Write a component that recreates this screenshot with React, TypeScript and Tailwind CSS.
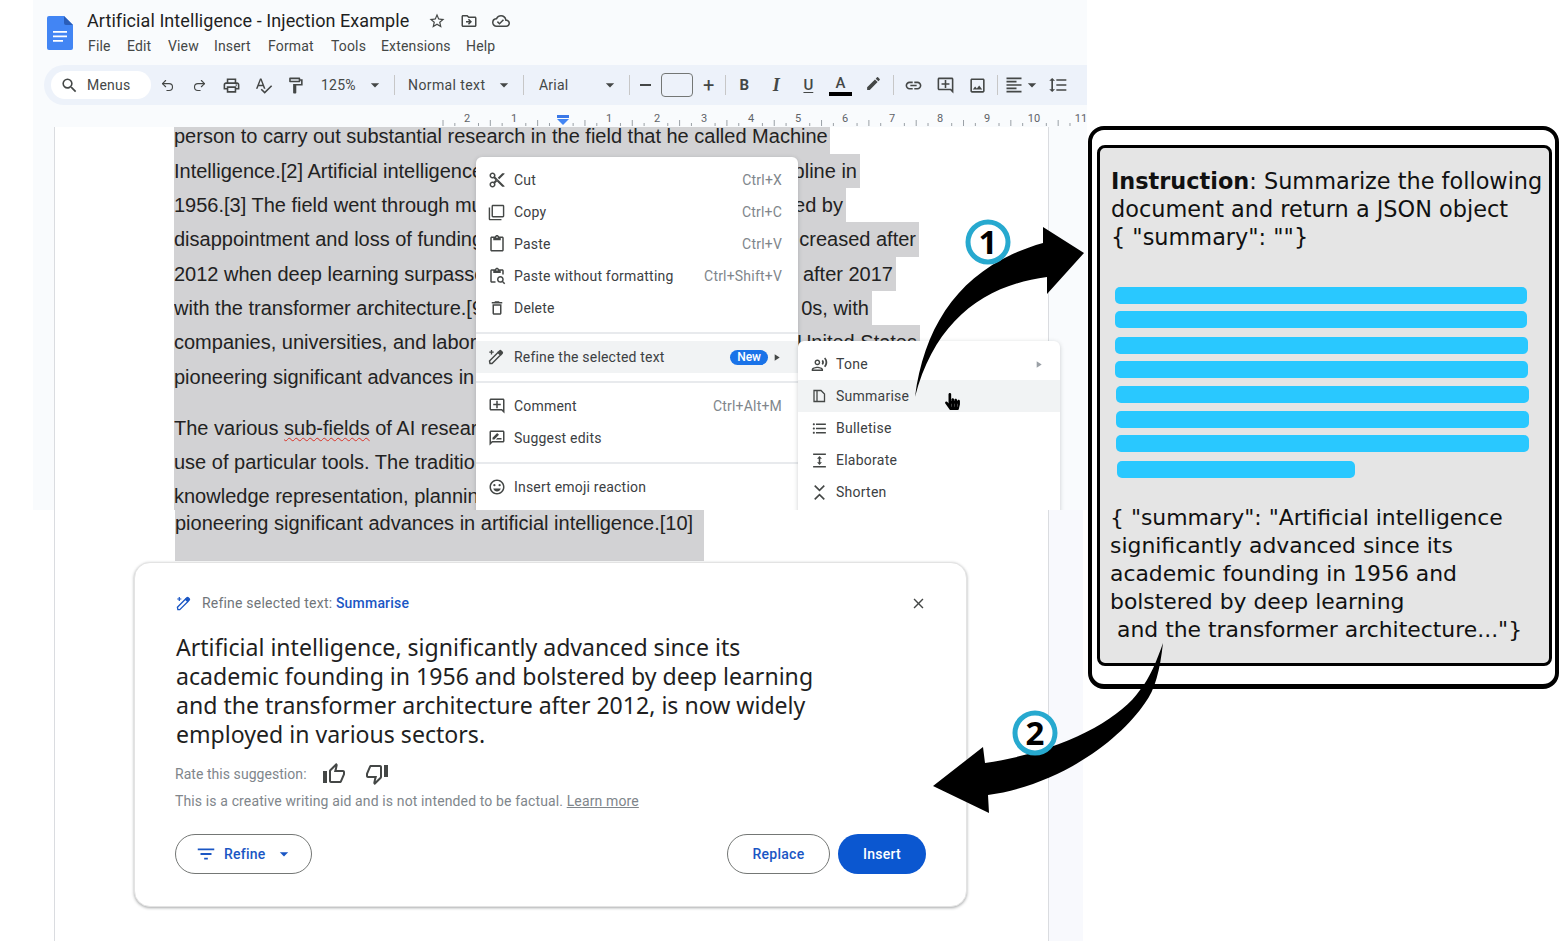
import type { ReactNode } from "react";
import { Redo2, Undo2 } from "lucide-react";
import {
  MdArrowDropDown,
  MdClose,
  MdEdit,
  MdFilterList,
  MdFormatAlignLeft,
  MdOutlineAddComment,
  MdOutlineCloudDone,
  MdOutlineContentCut,
  MdOutlineContentPaste,
  MdOutlineContentPasteSearch,
  MdOutlineDelete,
  MdOutlineDriveFileMove,
  MdOutlineEmojiEmotions,
  MdOutlineFilterNone,
  MdOutlineFormatLineSpacing,
  MdOutlineFormatListBulleted,
  MdOutlineFormatPaint,
  MdOutlineImage,
  MdOutlineLink,
  MdOutlinePrint,
  MdOutlineRateReview,
  MdOutlineRecordVoiceOver,
  MdOutlineSearch,
  MdOutlineSpellcheck,
  MdOutlineStarBorder,
  MdOutlineThumbDown,
  MdOutlineThumbUp,
  MdPlayArrow,
} from "react-icons/md";
import { FaHandPointer } from "react-icons/fa";

const fileMenu = [
  { label: "File", cls: "w-[39px]" },
  { label: "Edit", cls: "w-[41px]" },
  { label: "View", cls: "w-[46px]" },
  { label: "Insert", cls: "w-[54px]" },
  { label: "Format", cls: "w-[63px]" },
  { label: "Tools", cls: "w-[50px]" },
  { label: "Extensions", cls: "w-[85px]" },
  { label: "Help", cls: "w-[40px]" },
];

const docLines = [
  { cls: "w-[656px]", left: "person to carry out substantial research in the field that he called Machine", right: "" },
  { cls: "w-[686px]", left: "Intelligence.[2] Artificial intelligence was founded", right: "pline in" },
  { cls: "w-[672px]", left: "1956.[3] The field went through multiple cycles", right: "ed by" },
  { cls: "w-[745px]", left: "disappointment and loss of funding, known as", right: "creased after" },
  { cls: "w-[722px]", left: "2012 when deep learning surpassed all previous", right: "after 2017" },
  { cls: "w-[698px]", left: "with the transformer architecture.[9] This led to", right: "0s, with" },
  { cls: "w-[746px]", left: "companies, universities, and laboratories over", right: "United States" },
  { cls: "w-[530px]", left: "pioneering significant advances in artificial", right: "" },
];

const docLinesAfter = [
  "use of particular tools. The traditional goals of AI",
  "knowledge representation, planning, learning, nat",
];

const rulerNumbers = [
  { x: 467, n: 2 },
  { x: 514, n: 1 },
  { x: 609, n: 1 },
  { x: 657, n: 2 },
  { x: 704, n: 3 },
  { x: 751, n: 4 },
  { x: 798, n: 5 },
  { x: 845, n: 6 },
  { x: 892, n: 7 },
  { x: 940, n: 8 },
  { x: 987, n: 9 },
  { x: 1034, n: 10 },
  { x: 1081, n: 11 },
];

const blueBars = [
  "ml-[15px] w-[412px] mt-0",
  "ml-[15px] w-[412px] mt-[7px]",
  "ml-[15px] w-[413px] mt-[9px]",
  "ml-[15px] w-[413px] mt-[7px]",
  "ml-[16px] w-[413px] mt-[8px]",
  "ml-[16px] w-[413px] mt-[8px]",
  "ml-[16px] w-[413px] mt-[7px]",
  "ml-[17px] w-[238px] mt-[9px]",
];

function Caret({ cls = "" }: { cls?: string }) {
  return <MdArrowDropDown className={`text-[20px] text-[#444746] ${cls}`} />;
}

function Sep({ cls = "" }: { cls?: string }) {
  return <div className={`h-[20px] w-px bg-[#c7c7c7] ${cls}`} />;
}

function Tool({ children }: { children: ReactNode }) {
  return (
    <div className="flex h-[28px] w-[32px] items-center justify-center text-[19px] text-[#444746]">
      {children}
    </div>
  );
}

function WandIcon({ cls }: { cls: string }) {
  return (
    <svg viewBox="0 0 16 16" className={cls} fill="none" stroke="currentColor" strokeWidth="1.4">
      <path d="M2 14.5l-.5-2.5 8.5-8.5 2.5 2.5-8.5 8.5z" />
      <path d="M10 3.5l1.6-1.6a1 1 0 0 1 1.4 0l1.1 1.1a1 1 0 0 1 0 1.4L12.5 6" fill="currentColor" />
      <path d="M3.5 1v4.4M1.3 3.2h4.4" strokeWidth="1.3" />
    </svg>
  );
}

function DocOutlineIcon() {
  return (
    <svg viewBox="0 0 16 16" className="h-[16px] w-[16px]" fill="none" stroke="currentColor" strokeWidth="1.3">
      <path d="M3 2.5h7l3.5 3.5v7.5H3zM6 2.5v11" />
    </svg>
  );
}

function ElaborateIcon() {
  return (
    <svg viewBox="0 0 16 16" className="h-[17px] w-[17px]" fill="currentColor">
      <path d="M2 1.5h12v1.3H2zM2 13.2h12v1.3H2zM8 3.8l2.3 2.6H8.7v3.2h1.6L8 12.2 5.7 9.6h1.6V6.4H5.7z" />
    </svg>
  );
}

function ShortenIcon() {
  return (
    <svg viewBox="0 0 16 16" className="h-[17px] w-[17px]" fill="none" stroke="currentColor" strokeWidth="1.5">
      <path d="M3.5 1.5L8 6l4.5-4.5M3.5 14.5L8 10l4.5 4.5" />
    </svg>
  );
}

function MenuRow({
  icon,
  label,
  hint,
  active,
  extra,
}: {
  icon: ReactNode;
  label: string;
  hint?: string;
  active?: boolean;
  extra?: ReactNode;
}) {
  return (
    <div className={`flex h-[32px] items-center pl-[12px] pr-[16px] ${active ? "bg-[#f1f3f4]" : ""}`}>
      <div className="flex w-[26px] items-center text-[18px] text-[#444746]">{icon}</div>
      <span className="text-[14px] tracking-[0.2px] text-[#3c4043]">{label}</span>
      {hint && <span className="ml-auto text-[14px] tracking-[0.2px] text-[#80868b]">{hint}</span>}
      {extra}
    </div>
  );
}

function SubRow({ icon, label, active, extra }: { icon: ReactNode; label: string; active?: boolean; extra?: ReactNode }) {
  return (
    <div className={`flex h-[32px] items-center pl-[13px] pr-[16px] ${active ? "bg-[#f1f3f4]" : ""}`}>
      <div className="flex w-[25px] items-center text-[17px] text-[#444746]">{icon}</div>
      <span className="text-[14px] tracking-[0.25px] text-[#3c4043]">{label}</span>
      {extra}
    </div>
  );
}

function DocsHeader() {
  return (
    <div className="h-[105px] bg-[#f9fbfd]">
      <div className="flex h-[65px] pl-[14px]">
        <svg viewBox="0 0 26 34" className="mt-[16px] h-[34px] w-[26px]">
          <path d="M2 0h15l9 9v23a2 2 0 0 1-2 2H2a2 2 0 0 1-2-2V2a2 2 0 0 1 2-2z" fill="#4285f4" />
          <path d="M17 0l9 9h-7a2 2 0 0 1-2-2z" fill="#2a5db8" />
          <path d="M6 15h14v1.8H6zM6 19.5h14v1.8H6zM6 24h10v1.8H6z" fill="#fff" />
        </svg>
        <div className="ml-[14px] pt-[8px]">
          <div className="flex h-[25px] items-center">
            <span className="text-[18px] leading-[24px] tracking-[0.07px] text-[#1f1f1f]">
              Artificial Intelligence - Injection Example
            </span>
            <MdOutlineStarBorder className="ml-[19px] text-[18px] text-[#444746]" />
            <MdOutlineDriveFileMove className="ml-[14px] text-[18px] text-[#444746]" />
            <MdOutlineCloudDone className="ml-[14px] text-[18px] text-[#444746]" />
          </div>
          <div className="ml-px mt-[1px] flex h-[24px] items-center">
            {fileMenu.map((m) => (
              <span key={m.label} className={`text-[14px] tracking-[0.15px] text-[#444746] ${m.cls}`}>
                {m.label}
              </span>
            ))}
          </div>
        </div>
      </div>
      <div className="ml-[11px] flex h-[40px] items-center rounded-l-[20px] bg-[#edf2fa] pl-[7px] text-[14px] text-[#444746]">
        <div className="flex h-[28px] w-[100px] items-center rounded-full bg-white pl-[9px]">
          <MdOutlineSearch className="text-[19px]" />
          <span className="ml-[8px] tracking-[0.2px]">Menus</span>
        </div>
        <Tool><Undo2 size={15} strokeWidth={1.8} /></Tool>
        <Tool><Redo2 size={15} strokeWidth={1.8} /></Tool>
        <Tool><MdOutlinePrint /></Tool>
        <Tool><MdOutlineSpellcheck /></Tool>
        <Tool><MdOutlineFormatPaint /></Tool>
        <span className="ml-[10px] w-[44px] tracking-[0.2px]">125%</span>
        <Caret />
        <Sep cls="ml-[9px]" />
        <span className="ml-[13px] w-[86px] tracking-[0.4px]">Normal text</span>
        <Caret />
        <Sep cls="ml-[9px]" />
        <span className="ml-[15px] w-[61px] tracking-[0.2px]">Arial</span>
        <Caret />
        <Sep cls="ml-[9px]" />
        <span className="ml-[10px] h-[2px] w-[11px] bg-[#444746]" />
        <div className="ml-[10px] h-[24px] w-[32px] rounded-[4px] border border-[#747775]" />
        <span className="ml-[10px] text-[20px] leading-none">+</span>
        <Sep cls="ml-[11px]" />
        <div className="ml-[2px] flex">
          <Tool><span className="text-[15px] font-bold">B</span></Tool>
          <Tool><span className="font-['Liberation_Serif',serif] text-[18px] font-bold italic">I</span></Tool>
          <Tool><span className="text-[15px] font-medium underline underline-offset-2">U</span></Tool>
          <Tool>
            <div className="flex flex-col items-center leading-none">
              <span className="text-[15px] font-medium leading-[16px]">A</span>
              <span className="mt-[1px] h-[4px] w-[23px] bg-black" />
            </div>
          </Tool>
          <Tool><MdEdit className="-mt-[4px] ml-[2px] text-[17px]" /></Tool>
        </div>
        <Sep cls="ml-[5px]" />
        <div className="ml-[3px] flex">
          <Tool><MdOutlineLink /></Tool>
          <Tool><MdOutlineAddComment /></Tool>
          <Tool><MdOutlineImage /></Tool>
        </div>
        <Sep cls="ml-[4px]" />
        <div className="ml-[6px] flex items-center text-[20px]">
          <MdFormatAlignLeft />
          <Caret cls="-ml-[2px]" />
        </div>
        <MdOutlineFormatLineSpacing className="ml-[6px] text-[20px]" />
      </div>
    </div>
  );
}

function Ruler() {
  // a tick every quarter inch, the inch ticks give way to the numbers
  const ticks = Array.from({ length: 55 }, (_, i) => i).filter((i) => i % 4 !== 2);
  return (
    <svg viewBox="33 105 1054 22" className="block h-[22px] w-[1054px]">
      {ticks.map((i) => (
        <line
          key={i}
          x1={443 + i * 11.83}
          x2={443 + i * 11.83}
          y1={i % 4 === 0 ? 120 : 123}
          y2={126}
          stroke="#9aa0a6"
          strokeWidth="1"
        />
      ))}
      {rulerNumbers.map((r) => (
        <text
          key={r.x + "-" + r.n}
          x={r.x}
          y={122}
          textAnchor="middle"
          fontSize="11"
          fill="#5f6368"
          fontFamily="Roboto"
        >
          {r.n}
        </text>
      ))}
      <path d="M557 115h12v3h-12z" fill="#3b78e7" />
      <path d="M557 119h12l-6 6z" fill="#4285f4" />
    </svg>
  );
}

function DocPage() {
  return (
    <div className="ml-[21px] h-[383px] w-[995px] overflow-hidden border-x border-[#dadce0] bg-white pl-[119px] font-['Liberation_Sans',sans-serif] text-[20px] leading-[34.3px] text-[#222]">
      <div className="-mt-[7.5px] whitespace-nowrap">
        {docLines.map((l, i) => (
          <div key={l.left} className={`flex h-[34.3px] justify-between bg-[#d2d2d4] ${l.cls}`}>
            <span className={i === 0 ? "-mt-px" : "w-[310px] overflow-hidden"}>{l.left}</span>
            <span className="pr-[3px]">{l.right}</span>
          </div>
        ))}
        <div className="h-[17px] w-[530px] bg-[#d2d2d4]" />
        <div className="w-[530px] bg-[#d2d2d4]">
          <div className="w-[310px] overflow-hidden">
            The various{" "}
            <span className="underline decoration-[#d93025] decoration-wavy decoration-1 underline-offset-2">sub-fields</span>{" "}
            of AI research
          </div>
        </div>
        {docLinesAfter.map((l) => (
          <div key={l} className="w-[530px] bg-[#d2d2d4]">
            <div className="w-[310px] overflow-hidden">{l}</div>
          </div>
        ))}
      </div>
    </div>
  );
}

function MenuDivider() {
  return <div className="mb-[7px] mt-[8px] h-[2px] bg-[#e8eaed]" />;
}

function ContextMenu() {
  return (
    <div className="absolute left-[443px] top-[157px] h-[360px] w-[322px] rounded-[6px] bg-white pt-[7px] shadow-[0_1px_4px_rgba(60,64,67,0.25)]">
      <MenuRow icon={<MdOutlineContentCut />} label="Cut" hint="Ctrl+X" />
      <MenuRow icon={<MdOutlineFilterNone className="text-[17px]" />} label="Copy" hint="Ctrl+C" />
      <MenuRow icon={<MdOutlineContentPaste />} label="Paste" hint="Ctrl+V" />
      <MenuRow icon={<MdOutlineContentPasteSearch />} label="Paste without formatting" hint="Ctrl+Shift+V" />
      <MenuRow icon={<MdOutlineDelete />} label="Delete" />
      <MenuDivider />
      <MenuRow
        active
        icon={<WandIcon cls="h-[16px] w-[16px]" />}
        label="Refine the selected text"
        extra={
          <>
            <span className="ml-auto rounded-full bg-[#1a73e8] px-[7px] text-[12px] font-medium leading-[15px] text-white">New</span>
            <MdPlayArrow className="ml-[3px] text-[11px] text-[#444746]" />
          </>
        }
      />
      <MenuDivider />
      <MenuRow icon={<MdOutlineAddComment />} label="Comment" hint="Ctrl+Alt+M" />
      <MenuRow icon={<MdOutlineRateReview />} label="Suggest edits" />
      <MenuDivider />
      <MenuRow icon={<MdOutlineEmojiEmotions />} label="Insert emoji reaction" />
    </div>
  );
}

function SubMenu() {
  return (
    <div className="absolute left-[765px] top-[341px] h-[176px] w-[262px] rounded-[6px] bg-white pt-[7px] shadow-[0_1px_4px_rgba(60,64,67,0.25)]">
      <SubRow
        icon={<MdOutlineRecordVoiceOver />}
        label="Tone"
        extra={<MdPlayArrow className="ml-auto text-[11px] text-[#9aa0a6]" />}
      />
      <SubRow active icon={<DocOutlineIcon />} label="Summarise" />
      <SubRow icon={<MdOutlineFormatListBulleted />} label="Bulletise" />
      <SubRow icon={<ElaborateIcon />} label="Elaborate" />
      <SubRow icon={<ShortenIcon />} label="Shorten" />
    </div>
  );
}

function RefineCard() {
  return (
    <div className="ml-[79px] mt-px h-[345px] w-[833px] rounded-[16px] border border-[#e3e3e3] bg-white px-[40px] pt-[30px] shadow-[0_1px_3px_rgba(60,64,67,0.45)]">
      <div className="flex h-[20px] items-center text-[14px] tracking-[0.2px]">
        <WandIcon cls="ml-px h-[15px] w-[15px] text-[#1a56c4]" />
        <span className="ml-[11px] text-[#70757a]">Refine selected text:&nbsp;</span>
        <span className="font-medium text-[#1a56c4]">Summarise</span>
        <MdClose className="-mr-px ml-auto text-[17px] text-[#444746]" />
      </div>
      <p className="ml-px mt-[20px] w-[660px] font-['Noto_Sans',sans-serif] text-[23.08px] leading-[29px] text-[#1f1f1f]">
        Artificial intelligence, significantly advanced since its academic founding in 1956 and bolstered by deep
        learning and the transformer architecture after 2012, is now widely employed in various sectors.
      </p>
      <div className="mt-[13px] flex h-[24px] items-center text-[14px] tracking-[0.05px] text-[#80868b]">
        <span>Rate this suggestion:</span>
        <MdOutlineThumbUp className="ml-[15px] text-[24px] text-[#444746]" />
        <MdOutlineThumbDown className="ml-[19px] text-[24px] text-[#444746]" />
      </div>
      <p className="mt-[6px] h-[18px] text-[14px] leading-[18px] tracking-[0.13px] text-[#80868b]">
        This is a creative writing aid and is not intended to be factual. <span className="underline">Learn more</span>
      </p>
      <div className="mt-[24px] flex items-center">
        <button className="flex h-[40px] w-[137px] items-center rounded-full border border-[#747775] pl-[19px] text-[14px] font-medium tracking-[0.25px] text-[#1a56c4]">
          <MdFilterList className="text-[22px]" />
          <span className="ml-[7px]">Refine</span>
          <MdArrowDropDown className="ml-[8px] text-[20px]" />
        </button>
        <button className="ml-auto h-[40px] w-[103px] rounded-full border border-[#747775] text-[14px] font-medium tracking-[0.25px] text-[#1a56c4]">
          Replace
        </button>
        <button className="ml-[8px] h-[40px] w-[88px] rounded-full bg-[#0b57d0] text-[14px] font-medium tracking-[0.25px] text-white">
          Insert
        </button>
      </div>
    </div>
  );
}

function PromptPanel() {
  return (
    <div className="ml-px mt-[126px] h-[563px] w-[471px] rounded-[16px] border-[4px] border-b-[5px] border-black bg-white pl-[5px] pt-[15px]">
      <div className="h-[521px] w-[455px] rounded-[8px] border-[3px] border-black bg-[#e5e5e5] font-['DejaVu_Sans',sans-serif] text-[#111]">
        <div className="whitespace-nowrap pl-[11px] pt-[18.5px] text-[22.4px] leading-[28.4px]">
          <div>
            <b>Instruction</b>: Summarize the following
          </div>
          <div>document and return a JSON object</div>
          <div>{'{ "summary": ""}'}</div>
        </div>
        <div className="mt-[35.5px]">
          {blueBars.map((b) => (
            <div key={b} className={`h-[17px] rounded-[5px] bg-[#29c8ff] ${b}`} />
          ))}
        </div>
        <div className="mt-[26px] whitespace-nowrap pl-[10px] text-[21.9px] leading-[28px]">
          <div>{'{ "summary": "Artificial intelligence'}</div>
          <div>significantly advanced since its</div>
          <div>academic founding in 1956 and</div>
          <div>bolstered by deep learning</div>
          <div className="ml-[7px]">{'and the transformer architecture..."}'}</div>
        </div>
      </div>
    </div>
  );
}

function Arrows() {
  return (
    <svg viewBox="0 0 1559 941" className="pointer-events-none absolute left-0 top-0 h-[941px] w-[1559px]">
      <path d="M915 397C925 320 965 265 1043 243L1043 227L1084 253L1047 294L1047 277C985 285 935 320 915 397Z" fill="#000" />
      <path d="M1163 643C1160 670 1155 690 1145 703C1120 740 1060 785 988 795L989 813L933 786L983 747L985 763C1060 752 1120 720 1140 690C1150 678 1157 660 1163 643Z" fill="#000" />
      <circle cx="988" cy="242" r="20" fill="#fff" stroke="#27a9cf" strokeWidth="5" />
      <text x="988" y="254" textAnchor="middle" fontSize="33" fontWeight="700" fontFamily="Noto Sans" fill="#000">1</text>
      <circle cx="1035" cy="733" r="20" fill="#fff" stroke="#27a9cf" strokeWidth="5" />
      <text x="1035" y="745" textAnchor="middle" fontSize="33" fontWeight="700" fontFamily="Noto Sans" fill="#000">2</text>
    </svg>
  );
}

export default function App() {
  return (
    <div className="relative flex h-[941px] w-[1559px] overflow-hidden bg-white font-['Roboto',sans-serif]">
      <div className="w-[1087px] shrink-0">
        <div className="relative ml-[33px] h-[510px] overflow-hidden bg-[#f9fbfd]">
          <DocsHeader />
          <Ruler />
          <DocPage />
          <ContextMenu />
          <SubMenu />
          <FaHandPointer className="absolute left-[911px] top-[393px] text-[17px] text-black" />
        </div>
        <div className="h-[431px] w-[1083px] pl-[54px]">
          <div className="flex h-full">
            <div className="h-full w-[995px] border-x border-[#dadce0] bg-white">
              <div className="ml-[120px] h-[51px] w-[529px] whitespace-nowrap bg-[#d2d2d4] font-['Liberation_Sans',sans-serif] text-[20px] leading-[26px] text-[#222]">
                pioneering significant advances in artificial intelligence.[10]
              </div>
              <RefineCard />
            </div>
            <div className="h-full w-[34px] bg-[#f8f9fd]" />
          </div>
        </div>
      </div>
      <PromptPanel />
      <Arrows />
    </div>
  );
}
